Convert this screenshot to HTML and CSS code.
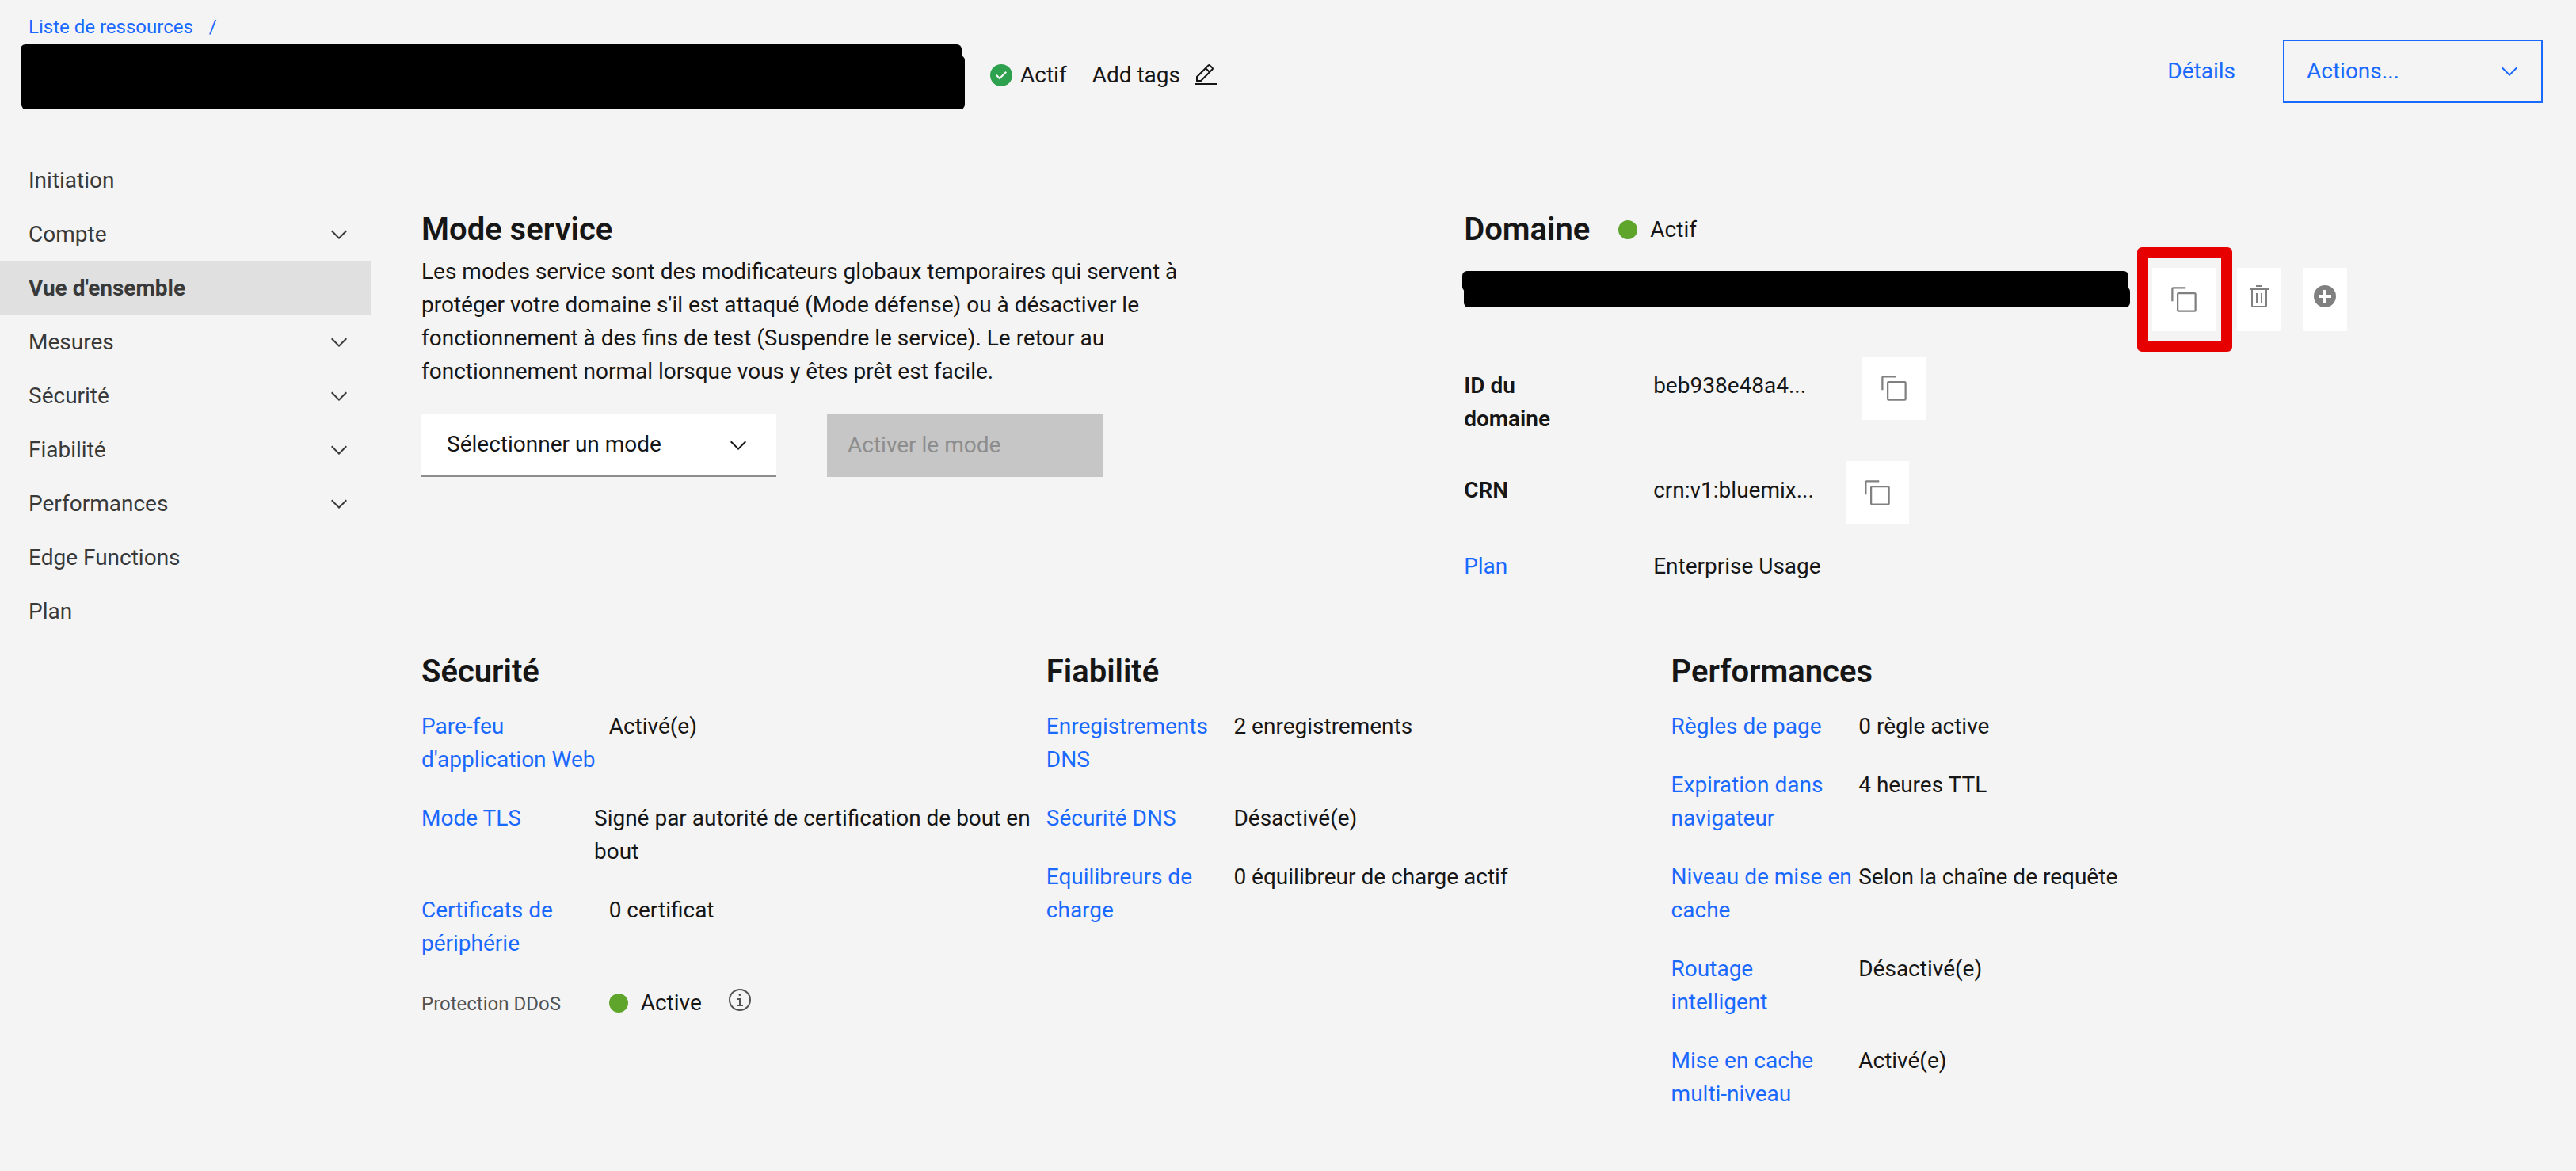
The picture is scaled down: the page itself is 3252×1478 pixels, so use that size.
FILE: index.html
```html
<!DOCTYPE html>
<html lang="fr">
<head>
<meta charset="utf-8">
<meta name="viewport" content="width=device-width, initial-scale=1">
<title>Vue d'ensemble</title>
<link rel="stylesheet" href="styles.css">
</head>
<body>
<svg class="sprite" aria-hidden="true">
  <symbol id="chevron" viewBox="0 0 16 16"><path d="M8 11 3 6l.7-.7L8 9.6l4.3-4.3.7.7z"/></symbol>
  <symbol id="copy" viewBox="0 0 32 32"><path d="M28 10v18H10V10h18m0-2H10a2 2 0 0 0-2 2v18a2 2 0 0 0 2 2h18a2 2 0 0 0 2-2V10a2 2 0 0 0-2-2Z"/><path d="M4 18H2V4a2 2 0 0 1 2-2h14v2H4Z"/></symbol>
  <symbol id="trash" viewBox="0 0 32 32"><path d="M12 12h2v12h-2zM18 12h2v12h-2zM4 6v2h2v20a2 2 0 0 0 2 2h16a2 2 0 0 0 2-2V8h2V6Zm4 22V8h16v20ZM12 2h8v2h-8z"/></symbol>
  <symbol id="add" viewBox="0 0 32 32"><path d="M16 2a14 14 0 1 0 14 14A14 14 0 0 0 16 2Zm8 16h-6v6h-4v-6H8v-4h6V8h4v6h6Z"/></symbol>
  <symbol id="check" viewBox="0 0 32 32"><path d="M16 2a14 14 0 1 0 14 14A14 14 0 0 0 16 2Zm-2 19.600-5-5L10.600 15 14 18.400 21.400 11 23 12.600Z"/></symbol>
  <symbol id="edit" viewBox="0 0 32 32"><path d="M2 26h28v2H2zM25.400 9c.8-.8.8-2 0-2.800l-3.600-3.600c-.8-.8-2-.8-2.800 0l-15 15V24h6.400Zm-5-5L24 7.600l-3 3L17.400 7ZM6 22v-3.600l10-10 3.600 3.600-10 10Z"/></symbol>
  <symbol id="info" viewBox="0 0 32 32"><path d="M17 22v-8h-4v2h2v6h-3v2h8v-2zM16 8a1.500 1.500 0 1 0 1.500 1.500A1.500 1.500 0 0 0 16 8Z"/><path d="M16 30a14 14 0 1 1 14-14 14 14 0 0 1-14 14Zm0-26a12 12 0 1 0 12 12A12 12 0 0 0 16 4Z"/></symbol>
</svg>

<header class="header">
  <div class="header-left">
    <nav class="breadcrumb" aria-label="Fil d'Ariane"><a href="#">Liste de ressources</a><span>/</span></nav>
    <div class="title-row">
      <div class="redacted redacted-title"><span class="strip strip-upper"></span><span class="strip strip-lower"></span></div>
      <div class="title-meta">
        <span class="state"><svg class="icon icon-ok"><use href="#check"/></svg>Actif</span>
        <button class="tags" type="button">Add tags<svg class="icon"><use href="#edit"/></svg></button>
      </div>
    </div>
  </div>
  <div class="header-right">
    <a href="#">Détails</a>
    <button class="actions" type="button">Actions...<svg class="icon"><use href="#chevron"/></svg></button>
  </div>
</header>

<div class="page">
  <nav class="sidebar" aria-label="Navigation">
    <a class="nav-item" href="#">Initiation</a>
    <button class="nav-item" type="button">Compte<svg class="icon"><use href="#chevron"/></svg></button>
    <a class="nav-item nav-current" href="#" aria-current="page">Vue d'ensemble</a>
    <button class="nav-item" type="button">Mesures<svg class="icon"><use href="#chevron"/></svg></button>
    <button class="nav-item" type="button">Sécurité<svg class="icon"><use href="#chevron"/></svg></button>
    <button class="nav-item" type="button">Fiabilité<svg class="icon"><use href="#chevron"/></svg></button>
    <button class="nav-item" type="button">Performances<svg class="icon"><use href="#chevron"/></svg></button>
    <a class="nav-item" href="#">Edge Functions</a>
    <a class="nav-item" href="#">Plan</a>
  </nav>

  <main class="main">
    <div class="overview">
      <section>
        <h2>Mode service</h2>
        <p class="description">Les modes service sont des modificateurs globaux temporaires qui servent à protéger votre domaine s'il est attaqué (Mode défense) ou à désactiver le fonctionnement à des fins de test (Suspendre le service). Le retour au fonctionnement normal lorsque vous y êtes prêt est facile.</p>
        <div class="mode-form">
          <div class="select-box">
            <select class="select" aria-label="Mode service"><option>Sélectionner un mode</option></select>
            <svg class="icon"><use href="#chevron"/></svg>
          </div>
          <button class="activate" type="button" disabled>Activer le mode</button>
        </div>
      </section>

      <section>
        <div class="domain-title"><h2>Domaine</h2><span class="status"><span class="dot"></span>Actif</span></div>
        <div class="domain-row">
          <div class="redacted redacted-domain"><span class="strip strip-upper"></span><span class="strip strip-lower"></span></div>
          <button class="tool highlighted" type="button" aria-label="Copier le domaine"><svg class="icon icon-copy"><use href="#copy"/></svg></button>
          <button class="tool tool-narrow" type="button" aria-label="Supprimer"><svg class="icon"><use href="#trash"/></svg></button>
          <button class="tool tool-narrow" type="button" aria-label="Ajouter"><svg class="icon"><use href="#add"/></svg></button>
        </div>
        <dl class="domain-info">
          <div class="info-row"><dt>ID du domaine</dt><dd><span class="value value-id">beb938e48a4...</span><button class="tool" type="button" aria-label="Copier l'ID"><svg class="icon icon-copy"><use href="#copy"/></svg></button></dd></div>
          <div class="info-row"><dt>CRN</dt><dd><span class="value value-crn">crn:v1:bluemix...</span><button class="tool" type="button" aria-label="Copier le CRN"><svg class="icon icon-copy"><use href="#copy"/></svg></button></dd></div>
          <div class="info-row"><dt><a href="#">Plan</a></dt><dd><span class="value">Enterprise Usage</span></dd></div>
        </dl>
      </section>
    </div>

    <div class="summary">
      <section>
        <h2>Sécurité</h2>
        <dl class="facts">
          <div class="fact"><dt><a href="#">Pare-feu d'application Web</a></dt><dd>Activé(e)</dd></div>
          <div class="fact fact-wide"><dt><a href="#">Mode TLS</a></dt><dd>Signé par autorité de certification de bout en bout</dd></div>
          <div class="fact"><dt><a href="#">Certificats de périphérie</a></dt><dd>0 certificat</dd></div>
          <div class="fact"><dt class="minor">Protection DDoS</dt><dd class="status"><span class="dot"></span>Active<svg class="icon icon-info"><use href="#info"/></svg></dd></div>
        </dl>
      </section>
      <section>
        <h2>Fiabilité</h2>
        <dl class="facts">
          <div class="fact"><dt><a href="#">Enregistrements DNS</a></dt><dd>2 enregistrements</dd></div>
          <div class="fact"><dt><a href="#">Sécurité DNS</a></dt><dd>Désactivé(e)</dd></div>
          <div class="fact"><dt><a href="#">Equilibreurs de charge</a></dt><dd>0 équilibreur de charge actif</dd></div>
        </dl>
      </section>
      <section>
        <h2>Performances</h2>
        <dl class="facts">
          <div class="fact"><dt><a href="#">Règles de page</a></dt><dd>0 règle active</dd></div>
          <div class="fact"><dt><a href="#">Expiration dans navigateur</a></dt><dd>4 heures TTL</dd></div>
          <div class="fact"><dt><a href="#">Niveau de mise en cache</a></dt><dd>Selon la chaîne de requête</dd></div>
          <div class="fact"><dt><a href="#">Routage<br>intelligent</a></dt><dd>Désactivé(e)</dd></div>
          <div class="fact"><dt><a href="#">Mise en cache multi-niveau</a></dt><dd>Activé(e)</dd></div>
        </dl>
      </section>
    </div>
  </main>
</div>
</body>
</html>
```
FILE: styles.css
```css
* { box-sizing: border-box; }

body {
  margin: 0;
  background: #f4f4f4;
  color: #161616;
  font: 28px/42px Roboto, "Liberation Sans", sans-serif;
}

a { color: #1a69ff; text-decoration: none; }
button, select { font: inherit; color: inherit; border: 0; border-radius: 0; cursor: pointer; }
h2, p, dl, dd { margin: 0; }
h2 { font-size: 40px; line-height: 48px; font-weight: 600; }

.sprite { position: absolute; width: 0; height: 0; }
.icon { width: 32px; height: 32px; flex: none; fill: currentColor; }

/* Header */
.header {
  display: flex;
  justify-content: space-between;
  align-items: flex-start;
  height: 160px;
  padding: 16px 42px 0 26px;
}
.breadcrumb {
  display: flex;
  gap: 20px;
  padding-left: 10px;
  color: #1a69ff;
  font-size: 24px;
  line-height: 36px;
}
.title-row { display: flex; gap: 30px; align-items: center; padding-top: 4px; }
.title-meta { display: flex; gap: 32px; align-items: center; padding-bottom: 4px; }
.state { display: flex; gap: 8px; align-items: center; }
.icon-ok { fill: #2da14e; }
.tags { display: flex; gap: 16px; align-items: center; padding: 0; background: none; }
.header-right { display: flex; gap: 60px; align-items: center; padding-top: 34px; }
.actions {
  display: flex;
  justify-content: space-between;
  align-items: center;
  width: 328px;
  height: 80px;
  padding: 0 24px 0 28px;
  border: 2px solid #1a69ff;
  background: none;
  color: #1a69ff;
}

/* Blacked-out names: two overlapping marker strokes */
.redacted { display: grid; flex: none; }
.strip { grid-area: 1 / 1; background: #000; border-radius: 6px; }
.redacted-title { width: 1192px; height: 82px; }
.redacted-title .strip-upper { margin: 0 4px 38px 0; }
.redacted-title .strip-lower { margin: 14px 0 0 1px; }
.redacted-domain { width: 844px; height: 46px; margin: 4px 0 0 -2px; }
.redacted-domain .strip-upper { margin: 0 3px 20px 0; }
.redacted-domain .strip-lower { margin: 20px 1px 0 2px; }

/* Layout */
.page { display: flex; align-items: flex-start; }
.sidebar { display: flex; flex-direction: column; flex: none; width: 468px; padding-top: 34px; }
.nav-item {
  display: flex;
  justify-content: space-between;
  align-items: center;
  height: 68px;
  padding: 0 24px 0 36px;
  background: none;
  color: #393939;
}
.nav-current { background: #e0e0e0; font-weight: 700; }
.main { flex: 1; min-width: 0; padding: 106px 0 64px 64px; }
.overview { display: grid; grid-template-columns: 15fr 16fr; }
.summary { display: grid; grid-template-columns: repeat(3, 1fr); width: 87%; margin-top: 72px; }

/* Service mode */
.description { max-width: 972px; margin-top: 8px; }
.mode-form { display: flex; gap: 64px; margin-top: 32px; }
.select-box { display: grid; align-items: center; width: 448px; }
.select {
  grid-area: 1 / 1;
  height: 80px;
  padding: 0 32px;
  border-bottom: 2px solid #8d8d8d;
  background: #fff;
  appearance: none;
}
.select-box .icon { grid-area: 1 / 1; justify-self: end; margin-right: 32px; pointer-events: none; }
.activate {
  width: 349px;
  height: 80px;
  padding: 0 26px;
  background: #c6c6c6;
  color: #8d8d8d;
  text-align: left;
}

/* Domain */
.domain-title { display: flex; gap: 36px; align-items: center; }
.status { display: flex; gap: 16px; align-items: center; }
.dot { width: 24px; height: 24px; flex: none; border-radius: 50%; background: #5fa52b; }
.domain-row { display: flex; gap: 27px; align-items: flex-start; margin-top: 24px; }
.tool {
  display: flex;
  justify-content: center;
  align-items: center;
  flex: none;
  width: 80px;
  height: 80px;
  padding: 0;
  background: #fff;
  color: #808080;
}
.tool-narrow { width: 56px; padding-bottom: 8px; }
.icon-copy { width: 36px; height: 36px; }
.highlighted { position: relative; }
.highlighted::after {
  content: "";
  position: absolute;
  inset: -26px -21px -26px -19px;
  border: 14px solid #e60000;
  border-radius: 6px;
}
.domain-info { display: flex; flex-direction: column; gap: 16px; margin-top: 32px; }
.info-row { display: grid; grid-template-columns: 239px 1fr; }
.info-row dt { max-width: 160px; padding: 16px 0; font-weight: 600; }
.info-row dt a { font-weight: 400; }
.info-row dd { display: flex; gap: 32px; align-items: flex-start; }
.value { padding-top: 16px; }
.value-id { width: 232px; }
.value-crn { width: 211px; }

/* Summary */
.facts { display: flex; flex-direction: column; gap: 32px; margin-top: 24px; }
.fact { display: grid; grid-template-columns: 30% 1fr; }
.fact-wide { grid-template-columns: 218px 1fr; }
.fact-wide dd { padding-right: 8px; }
.minor { padding-top: 2px; color: #525252; font-size: 24px; }
.icon-info { margin: -8px 0 0 16px; fill: #525252; }
```
